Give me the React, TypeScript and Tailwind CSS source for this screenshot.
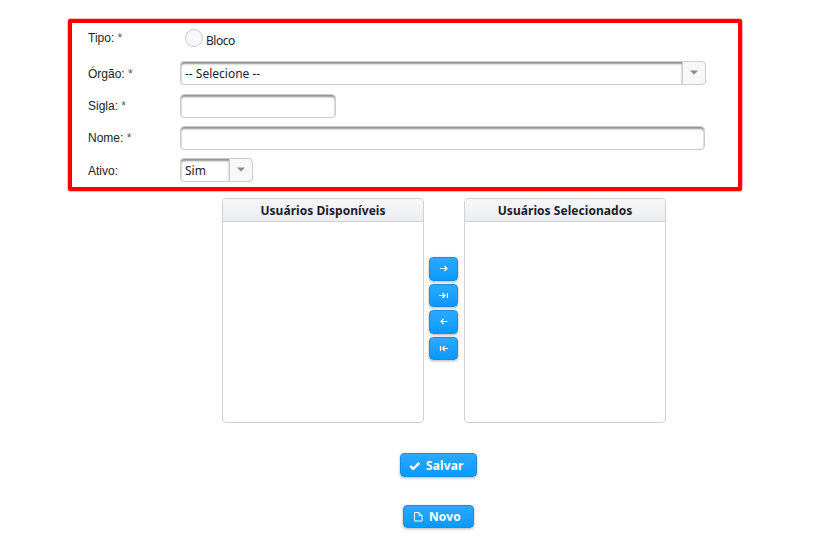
import React from "react";

const label = "w-[92px] shrink-0 font-['Liberation_Sans',Arial,sans-serif] text-[12px] leading-[14px] text-[#222222]";
const field =
  "h-[24px] border border-[#cccccc] bg-white shadow-[inset_0_2px_2px_#8f8f8f]";
const blue =
  "flex items-center rounded-[4px] border border-[#188ee0] bg-linear-to-b from-[#2aa9ff] to-[#0799ff] text-white shadow-[0_1px_3px_rgba(0,0,0,0.3)]";

function Select({ text, width }: { text: string; width: string }) {
  return (
    <div className={`flex ${width}`}>
      <div className={`${field} flex min-w-0 flex-1 items-center rounded-l-[4px] border-r-0 pl-1 pt-[2px] text-[12px] leading-[14px] text-[#222222]`}>
        <span>{text}</span>
      </div>
      <div className="flex h-[24px] w-[24px] items-center justify-center rounded-r-[4px] border border-[#cccccc] bg-[#f8f8fb]">
        <svg width="8" height="5" viewBox="0 0 8 5" className="mb-px">
          <path d="M0 0.5h8L4 4.5z" fill="#88888b" />
        </svg>
      </div>
    </div>
  );
}

function PickPanel({ title }: { title: string }) {
  return (
    <section className="h-[225px] w-[202px] overflow-hidden rounded-[4px] border border-[#d0d0d2] bg-white">
      <h2 className="flex h-[23px] items-center justify-center border-b border-[#d0d0d2] bg-linear-to-b from-[#f6f7f9] to-[#ebedf0] pt-[2px] text-[12px] font-bold tracking-[0.05px] text-[#1c1c28]">
        {title}
      </h2>
    </section>
  );
}

const arrows = [
  { name: "Adicionar", d: "M1 3.5h7M5.5 1l2.5 2.5L5.5 6" },
  { name: "Adicionar todos", d: "M0 3.5h6M3.5 1L6 3.5L3.5 6M8.5 1v5" },
  { name: "Remover", d: "M8.5 3.5H2M4.5 1L2 3.5L4.5 6" },
  { name: "Remover todos", d: "M9 3.5H3.5M6 1L3.5 3.5L6 6M1.5 1v5" },
];

export default function App() {
  return (
    <main className="h-[541px] w-[815px] overflow-hidden bg-white pt-[19px] font-['Noto_Sans','Open_Sans',sans-serif]">
      <form className="ml-[68px] h-[172px] w-[674px] rounded-[2px] border-4 border-[#ff0000] pl-4 shadow-[0_0_0_0.5px_#ff8080]">
        <div className="flex h-[38px] pt-[6px]">
          <span className={`${label} pt-[2px]`}>Tipo: <span className="text-[#4f5b6c]">*</span></span>
          <span className="ml-[5px] h-[18px] w-[18px] rounded-full border border-[#cccccc] bg-[#f8f8fb]" />
          <span className="ml-[3px] mt-[5px] text-[12px] leading-[14px] tracking-[-0.45px] text-[#222222]">Bloco</span>
        </div>
        <div className="flex h-[33px]">
          <span className={`${label} pt-[6px]`}>Órgão: <span className="text-[#4f5b6c]">*</span></span>
          <Select text="-- Selecione --" width="w-[526px]" />
        </div>
        <div className="flex h-[32px]">
          <span className={`${label} pt-[5px]`}>Sigla: <span className="text-[#4f5b6c]">*</span></span>
          <div className={`${field} w-[156px] rounded-[4px]`} />
        </div>
        <div className="flex h-[32px]">
          <span className={`${label} pt-[5px]`}>Nome: <span className="text-[#4f5b6c]">*</span></span>
          <div className={`${field} w-[525px] rounded-[4px]`} />
        </div>
        <div className="flex">
          <span className={`${label} pt-[6px]`}>Ativo:</span>
          <Select text="Sim" width="w-[73px]" />
        </div>
      </form>

      <div className="ml-[222px] mt-[7px] flex">
        <PickPanel title="Usuários Disponíveis" />
        <div className="mx-[5px] mt-[59px] flex w-[30px] flex-col gap-[3px]">
          {arrows.map((a) => (
            <button key={a.name} aria-label={a.name} className={`${blue} h-[23.6px] w-[29px] justify-center`}>
              <svg width="9" height="7" viewBox="0 0 9 7" fill="none" stroke="white" strokeWidth="1.2">
                <path d={a.d} />
              </svg>
            </button>
          ))}
        </div>
        <PickPanel title="Usuários Selecionados" />
      </div>

      <button className={`${blue} ml-[400px] mt-[30px] h-[24px] w-[77px] pl-[8px]`}>
        <svg width="12" height="10" viewBox="0 0 12 10" fill="none" stroke="white" strokeWidth="2.4" className="mt-px">
          <path d="M1.2 5l3 2.8l6-6" />
        </svg>
        <span className="ml-[5px] mt-[2px] text-[12px] font-bold leading-[14px] tracking-[0.1px]">Salvar</span>
      </button>
      <button className={`${blue} ml-[403px] mt-[28px] h-[23px] w-[71px] pl-[10px]`}>
        <svg width="9" height="10" viewBox="0 0 9 10" fill="none" stroke="white" strokeWidth="1">
          <path d="M0.5 0.5h4.5l3 3v5.5h-7.5zM5 0.5v3h3" />
        </svg>
        <span className="ml-[6px] text-[12px] font-bold leading-[14px] tracking-[0.1px]">Novo</span>
      </button>
    </main>
  );
}
